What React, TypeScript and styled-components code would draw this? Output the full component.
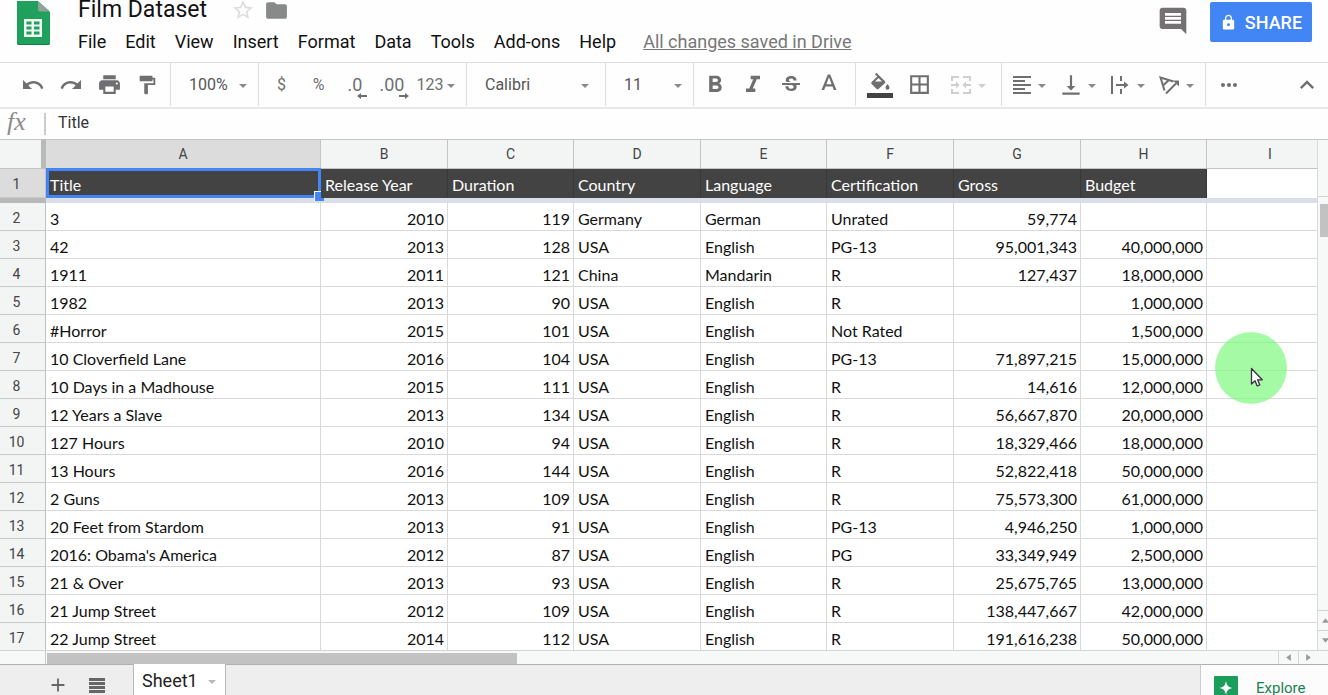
import React from "react";
import styled, { createGlobalStyle } from "styled-components";
import {
  MdUndo,
  MdRedo,
  MdPrint,
  MdFormatPaint,
  MdFormatBold,
  MdFormatItalic,
  MdStrikethroughS,
  MdBorderAll,
  MdFormatAlignLeft,
  MdVerticalAlignBottom,
  MdMoreHoriz,
  MdKeyboardArrowUp,
  MdStarBorder,
  MdFolder,
  MdComment,
  MdLock,
  MdAdd,
} from "react-icons/md";

const GlobalStyle = createGlobalStyle`
  * { box-sizing: border-box; }
  body { margin: 0; background: #fefefe; font-family: Roboto, "Liberation Sans", sans-serif; color: #111; }
  button, input, select { font: inherit; color: inherit; background: none; border: 0; padding: 0; margin: 0; border-radius: 0; }
  button { cursor: pointer; }
`;

const Page = styled.div`
  position: relative;
  display: flex;
  flex-direction: column;
  height: 100vh;
  overflow: hidden;
`;

/* ---------- header ---------- */

const Header = styled.header`
  display: flex;
  align-items: flex-start;
  flex: none;
  height: 62px;
  padding: 0 16px;
`;

const Logo = styled.svg`
  flex: none;
  width: 34px;
  height: 46px;
  margin-right: 28px;
`;

const HeaderMain = styled.div`
  flex: 1;
  min-width: 0;
`;

const TitleRow = styled.div`
  display: flex;
  align-items: center;
  height: 20px;
`;

const DocTitle = styled.h1`
  margin: 0 24px 0 0;
  font-size: 23px;
  font-weight: 400;
  line-height: 20px;
  white-space: nowrap;
`;

const TitleButton = styled.button<{ $color: string }>`
  display: flex;
  margin-right: 9px;
  color: ${(p) => p.$color};
`;

const MenuBar = styled.nav`
  display: flex;
  align-items: center;
  gap: 19px;
  height: 43px;
  font-size: 18px;
  white-space: nowrap;
`;

const SavedLink = styled.a`
  margin-left: 8px;
  color: #777;
  text-decoration: underline;
`;

const CommentButton = styled.button`
  display: flex;
  margin: 5px 21px 0 0;
  color: #757072;
`;

const ShareButton = styled.button`
  display: flex;
  align-items: center;
  justify-content: center;
  gap: 8px;
  width: 102px;
  height: 40px;
  margin-top: 2px;
  border-radius: 2px;
  background: #4285f4;
  color: #fff;
  font-size: 18px;
  font-weight: 500;
`;

/* ---------- toolbar ---------- */

const Toolbar = styled.div`
  display: flex;
  flex: none;
  height: 47px;
  padding-bottom: 1px;
  border-top: 1px solid #e0e0e0;
  border-bottom: 2px solid #e8e8e8;
  color: #6f6f71;
`;

const Group = styled.div<{ $width: number; $pad: number }>`
  display: flex;
  align-items: center;
  flex: none;
  width: ${(p) => p.$width}px;
  padding-left: ${(p) => p.$pad}px;
  border-right: 1px solid #dedede;
`;

const Tool = styled.button<{ $width?: number }>`
  display: flex;
  align-items: center;
  justify-content: center;
  flex: none;
  gap: 4px;
  width: ${(p) => p.$width ?? 38}px;
  height: 36px;
  font-size: 16px;
`;

const EndTools = styled.div`
  display: flex;
  flex: 1;
  align-items: center;
  justify-content: space-between;
  padding: 0 2px 0 4px;
`;

const Picker = styled.label<{ $end?: number }>`
  display: flex;
  align-items: center;
  flex: 1;
  padding-right: ${(p) => p.$end ?? 11}px;
  font-size: 16px;
  color: #555;
`;

const PickerSelect = styled.select`
  flex: 1;
  min-width: 0;
  appearance: none;
  outline: none;
`;

const CaretSvg = styled.svg<{ $color: string }>`
  flex: none;
  width: 8px;
  height: 4px;
  margin-top: 3px;
  fill: ${(p) => p.$color};
`;

const Caret = ({ color = "#8a8a8a" }: { color?: string }) => (
  <CaretSvg $color={color} viewBox="0 0 8 4" aria-hidden="true">
    <path d="M0 0h8L4 4z" />
  </CaretSvg>
);

const DecimalLabel = styled.span`
  position: relative;
  font-size: 18px;
`;

const DecimalArrow = styled.svg`
  position: absolute;
  right: -5px;
  bottom: -4px;
  width: 10px;
  height: 6px;
`;

const ToolSvg = styled.svg`
  flex: none;
  width: 26px;
  height: 26px;
`;

/* ---------- formula bar ---------- */

const FormulaBar = styled.div`
  display: flex;
  align-items: center;
  flex: none;
  height: 30px;
  padding: 0 4px;
`;

const Fx = styled.label`
  width: 40px;
  padding: 0 0 4px 3px;
  font-family: "Liberation Serif", serif;
  font-style: italic;
  font-size: 26px;
  line-height: 24px;
  color: #8c8c8c;
`;

const FormulaInput = styled.input`
  flex: 1;
  height: 22px;
  padding: 0 0 4px 12px;
  border-left: 2px solid #ccc;
  font-size: 16px;
  color: #333;
  outline: none;
`;

/* ---------- grid ---------- */

const SheetArea = styled.main`
  display: flex;
  flex: 1;
  min-height: 0;
`;

const GridViewport = styled.div`
  flex: 1;
  min-width: 0;
  overflow: hidden;
  border-right: 1px solid #d9d9d9;
`;

const Grid = styled.table`
  width: 100%;
  min-width: 1334px;
  table-layout: fixed;
  border-collapse: separate;
  border-spacing: 0;
  font-family: Lato, "Liberation Sans", sans-serif;
  font-size: 16px;
  line-height: 20px;
`;

const Corner = styled.td`
  padding: 0;
  height: 30px;
  background: #f3f5f4;
  border-top: 1px solid #c4c4c4;
  border-bottom: 1px solid #c4c4c4;
  border-right: 5px solid #b9b9b9;
`;

const ColumnHead = styled.th<{ $active?: boolean }>`
  padding: 0;
  height: 30px;
  font: 400 14px/20px Roboto, "Liberation Sans", sans-serif;
  color: #444;
  background: ${(p) => (p.$active ? "#dcdcdc" : "#f3f5f4")};
  border-top: 1px solid #c4c4c4;
  border-bottom: 1px solid #c4c4c4;
  border-right: 1px solid #c4c4c4;
`;

const RowHead = styled.th<{ $active?: boolean }>`
  padding: 2px 12px 0 0;
  height: 28px;
  font: 400 14px/20px Roboto, "Liberation Sans", sans-serif;
  color: #444;
  text-align: center;
  background: ${(p) => (p.$active ? "#dcdcdc" : "#f3f5f4")};
  border-right: 1px solid #c0c0c0;
  border-bottom: 1px solid #c9c9c9;
`;

const TitleCell = styled.td<{ $blank?: boolean }>`
  position: relative;
  height: 29px;
  padding: 2px 4px 0;
  color: #fff;
  background: ${(p) => (p.$blank ? "#fff" : "#434343")};
  border-right: 1px solid ${(p) => (p.$blank ? "#d9d9d9" : "#383838")};
  white-space: nowrap;
`;

const Selection = styled.span`
  position: absolute;
  inset: -1px -1px 0 0;
  border: 3px solid #4285f4;

  &::after {
    content: "";
    position: absolute;
    right: -6px;
    bottom: -6px;
    width: 9px;
    height: 9px;
    background: #4285f4;
    border: solid #fff;
    border-width: 1px 0 0 1px;
  }
`;

const FreezeCell = styled.td<{ $head?: boolean }>`
  height: 5px;
  padding: 0;
  background: ${(p) => (p.$head ? "#b9b9b9" : "#dadee8")};
`;

const Cell = styled.td<{ $numeric?: boolean }>`
  height: 28px;
  padding: 4px 3px 0 4px;
  text-align: ${(p) => (p.$numeric ? "right" : "left")};
  background: #fff;
  border-right: 1px solid #d9d9d9;
  border-bottom: 1px solid #d9d9d9;
  white-space: nowrap;
`;

/* ---------- scroll bars ---------- */

const VScroll = styled.div`
  display: flex;
  flex-direction: column;
  flex: none;
  width: 10px;
  background: #f7f8f8;
  border-top: 1px solid #c4c4c4;
`;

const VScrollFrozen = styled.div`
  height: 57px;
  border-bottom: 1px solid #d4d4d4;
`;

const VTrack = styled.div`
  flex: 1;
  padding: 7px 0 0 2px;
`;

const VThumb = styled.div`
  height: 33px;
  background: #c2c2c2;
`;

const ArrowButton = styled.button<{ $vertical?: boolean }>`
  display: flex;
  align-items: center;
  justify-content: center;
  flex: none;
  width: ${(p) => (p.$vertical ? 10 : 20)}px;
  height: ${(p) => (p.$vertical ? 20 : 13)}px;
  padding-left: ${(p) => (p.$vertical ? 4 : 0)}px;
  border: solid #d4d4d4;
  border-width: ${(p) => (p.$vertical ? "1px 0 0 0" : "0 0 0 1px")};

  svg {
    flex: none;
    width: 7px;
    height: 7px;
    fill: #999;
  }
`;

const HScroll = styled.div`
  display: flex;
  flex: none;
  height: 14px;
  padding-right: 10px;
  background: #f7f8f8;
  border-top: 1px solid #d4d4d4;
`;

const HTrack = styled.div`
  flex: 1;
  margin-left: 45px;
  padding: 2px 0 0 1px;
  border-left: 1px solid #c9c9c9;
`;

const HThumb = styled.div`
  width: 470px;
  max-width: 100%;
  height: 11px;
  background: #c2c2c2;
`;

/* ---------- sheet tabs ---------- */

const Footer = styled.footer`
  display: flex;
  flex: none;
  height: 31px;
  overflow: hidden;
  background: #eee;
`;

const FooterTools = styled.div`
  display: flex;
  gap: 16px;
  width: 133px;
  height: 41px;
  padding-left: 46px;
  align-items: center;
  border-top: 1px solid #b0b0b0;
  color: #666;
`;

const FooterButton = styled.button`
  display: flex;
  justify-content: center;
  width: 23px;
`;

const SheetTab = styled.button`
  display: flex;
  align-items: center;
  justify-content: space-between;
  width: 93px;
  height: 33px;
  padding: 0 9px 0 8px;
  background: #fff;
  border: solid #b8b8b8;
  border-width: 0 1px;
  font-size: 18px;
  color: #222;
`;

const FooterFill = styled.div`
  flex: 1;
  border-top: 1px solid #b0b0b0;
`;

const ExploreButton = styled.button`
  display: flex;
  align-items: center;
  gap: 18px;
  width: 128px;
  height: 47px;
  padding-left: 13px;
  background: #fcfcfc;
  border-top: 1px solid #b0b0b0;
  border-left: 1px solid #ccc;
  font-size: 15px;
  color: #17834f;
`;

/* ---------- pointer ---------- */

const PointerHalo = styled.div`
  position: absolute;
  top: 332px;
  right: 41px;
  width: 72px;
  height: 72px;
  border-radius: 50%;
  background: rgba(127, 250, 127, 0.7);
  pointer-events: none;
`;

const PointerSvg = styled.svg`
  position: absolute;
  left: 35px;
  top: 35px;
  width: 14px;
  height: 21px;
`;

const MENUS = ["File", "Edit", "View", "Insert", "Format", "Data", "Tools", "Add-ons", "Help"];

const COLUMNS = [
  { letter: "A", title: "Title", width: 275 },
  { letter: "B", title: "Release Year", width: 127, numeric: true },
  { letter: "C", title: "Duration", width: 126, numeric: true },
  { letter: "D", title: "Country", width: 127 },
  { letter: "E", title: "Language", width: 126 },
  { letter: "F", title: "Certification", width: 127 },
  { letter: "G", title: "Gross", width: 127, numeric: true },
  { letter: "H", title: "Budget", width: 126, numeric: true },
];

const FILMS = [
  ["3", "2010", "119", "Germany", "German", "Unrated", "59,774", ""],
  ["42", "2013", "128", "USA", "English", "PG-13", "95,001,343", "40,000,000"],
  ["1911", "2011", "121", "China", "Mandarin", "R", "127,437", "18,000,000"],
  ["1982", "2013", "90", "USA", "English", "R", "", "1,000,000"],
  ["#Horror", "2015", "101", "USA", "English", "Not Rated", "", "1,500,000"],
  ["10 Cloverfield Lane", "2016", "104", "USA", "English", "PG-13", "71,897,215", "15,000,000"],
  ["10 Days in a Madhouse", "2015", "111", "USA", "English", "R", "14,616", "12,000,000"],
  ["12 Years a Slave", "2013", "134", "USA", "English", "R", "56,667,870", "20,000,000"],
  ["127 Hours", "2010", "94", "USA", "English", "R", "18,329,466", "18,000,000"],
  ["13 Hours", "2016", "144", "USA", "English", "R", "52,822,418", "50,000,000"],
  ["2 Guns", "2013", "109", "USA", "English", "R", "75,573,300", "61,000,000"],
  ["20 Feet from Stardom", "2013", "91", "USA", "English", "PG-13", "4,946,250", "1,000,000"],
  ["2016: Obama's America", "2012", "87", "USA", "English", "PG", "33,349,949", "2,500,000"],
  ["21 & Over", "2013", "93", "USA", "English", "R", "25,675,765", "13,000,000"],
  ["21 Jump Street", "2012", "109", "USA", "English", "R", "138,447,667", "42,000,000"],
  ["22 Jump Street", "2014", "112", "USA", "English", "R", "191,616,238", "50,000,000"],
];

const Decimal = ({ text, right }: { text: string; right?: boolean }) => (
  <DecimalLabel>
    {text}
    <DecimalArrow viewBox="0 0 10 6" fill="currentColor" aria-hidden="true">
      <path d={right ? "M0 2h6V0l4 3-4 3V4H0z" : "M10 2H4V0L0 3l4 3V4h6z"} />
    </DecimalArrow>
  </DecimalLabel>
);

export default function App() {
  return (
    <Page>
      <GlobalStyle />

      <Header>
        <Logo viewBox="0 0 34 46" aria-hidden="true">
          <path d="M1 1h21l12 11v31a2 2 0 0 1-2 2H3a2 2 0 0 1-2-2z" fill="#1fa15d" />
          <path d="M22 1l12 10.500H24a2 2 0 0 1-2-2z" fill="#8fa39a" />
          <path d="M1 42v1a2 2 0 0 0 2 2h29a2 2 0 0 0 2-2v-1a2 2 0 0 1-2 2H3a2 2 0 0 1-2-2z" fill="#178048" />
          <path
            fillRule="evenodd"
            fill="#f1f5f2"
            d="M8 19h18v18H8zM10.500 21.500v3h5v-3zM18 21.500v3h5.500v-3zM10.500 26.500v3h5v-3zM18 26.500v3h5.500v-3zM10.500 31.500v3h5v-3zM18 31.500v3h5.500v-3z"
          />
        </Logo>
        <HeaderMain>
          <TitleRow>
            <DocTitle>Film Dataset</DocTitle>
            <TitleButton $color="#dcdcdc" aria-label="Star">
              <MdStarBorder size={24} />
            </TitleButton>
            <TitleButton $color="#868b8a" aria-label="Move to folder">
              <MdFolder size={25} />
            </TitleButton>
          </TitleRow>
          <MenuBar>
            {MENUS.map((m) => (
              <button key={m}>{m}</button>
            ))}
            <SavedLink href="#drive">All changes saved in Drive</SavedLink>
          </MenuBar>
        </HeaderMain>
        <CommentButton aria-label="Comments">
          <MdComment size={32} />
        </CommentButton>
        <ShareButton>
          <MdLock size={17} />
          SHARE
        </ShareButton>
      </Header>

      <Toolbar role="toolbar" aria-label="Formatting">
        <Group $width={171} $pad={14}>
          <Tool aria-label="Undo"><MdUndo size={24} /></Tool>
          <Tool aria-label="Redo"><MdRedo size={24} /></Tool>
          <Tool aria-label="Print"><MdPrint size={25} /></Tool>
          <Tool aria-label="Paint format"><MdFormatPaint size={22} /></Tool>
        </Group>
        <Group $width={88} $pad={18}>
          <Picker>
            <PickerSelect aria-label="Zoom"><option>100%</option></PickerSelect>
            <Caret />
          </Picker>
        </Group>
        <Group $width={208} $pad={4}>
          <Tool $width={37}>$</Tool>
          <Tool $width={37}>%</Tool>
          <Tool $width={36} aria-label="Decrease decimal places"><Decimal text=".0" /></Tool>
          <Tool $width={38} aria-label="Increase decimal places"><Decimal text=".00" right /></Tool>
          <Tool $width={50}>123<Caret /></Tool>
        </Group>
        <Group $width={139} $pad={18}>
          <Picker $end={16}>
            <PickerSelect aria-label="Font"><option>Calibri</option></PickerSelect>
            <Caret />
          </Picker>
        </Group>
        <Group $width={88} $pad={18}>
          <Picker>
            <PickerSelect aria-label="Font size"><option>11</option></PickerSelect>
            <Caret />
          </Picker>
        </Group>
        <Group $width={162} $pad={2}>
          <Tool aria-label="Bold"><MdFormatBold size={28} /></Tool>
          <Tool aria-label="Italic"><MdFormatItalic size={28} /></Tool>
          <Tool aria-label="Strikethrough"><MdStrikethroughS size={24} /></Tool>
          <Tool aria-label="Text color">
            <ToolSvg viewBox="0 0 26 26" fill="currentColor">
              <path d="M11.800 2.500h2.400L20.500 18h-2.700l-1.300-3.500h-7L8.200 18H5.500zM10.400 12.200h5.200L13 5.300z" />
            </ToolSvg>
          </Tool>
        </Group>
        <Group $width={146} $pad={5}>
          <Tool aria-label="Fill color">
            <ToolSvg viewBox="0 0 26 26" fill="currentColor">
              <path d="M18 9.200 9.400 .8 8 2.200l2.200 2.200L4.600 10a1.300 1.300 0 0 0 0 1.900l5 5c.5.500 1.300.500 1.900 0l6.500-6c.5-.400.5-1.200 0-1.700zM8 9.400l3.500-3.400 3.500 3.400zM20.500 12s-2 2.300-2 3.700a2 2 0 0 0 4 0c0-1.400-2-3.700-2-3.700z" />
              <path d="M0 21h26v5H0z" fill="#434343" />
            </ToolSvg>
          </Tool>
          <Tool $width={41} aria-label="Borders"><MdBorderAll size={25} /></Tool>
          <Tool $width={54} aria-label="Merge cells">
            <ToolSvg viewBox="2 0 26 26" fill="none" stroke="#cfcfcf" strokeWidth="2">
              <path d="M6 9V5h7M17 5h7v4M6 17v4h7M17 21h7v-4M5 13h5M25 13h-5" />
              <path d="M10 9.500l3.500 3.500-3.500 3.500zM20 9.500L16.500 13l3.500 3.500z" fill="#cfcfcf" stroke="none" />
            </ToolSvg>
            <Caret color="#cfcfcf" />
          </Tool>
        </Group>
        <Group $width={204} $pad={1}>
          <Tool $width={49} aria-label="Horizontal align"><MdFormatAlignLeft size={24} /><Caret /></Tool>
          <Tool $width={49} aria-label="Vertical align"><MdVerticalAlignBottom size={26} /><Caret /></Tool>
          <Tool $width={49} aria-label="Text wrapping">
            <ToolSvg viewBox="0 0 26 26" fill="none" stroke="currentColor" strokeWidth="2">
              <path d="M5 4v18M14 4v5M14 17v5M9 13h9" />
              <path d="M17 9.500l4.500 3.500-4.500 3.500z" fill="currentColor" stroke="none" />
            </ToolSvg>
            <Caret />
          </Tool>
          <Tool $width={49} aria-label="Text rotation">
            <ToolSvg viewBox="0 0 26 26" fill="none" stroke="currentColor" strokeWidth="2">
              <path d="M8.500 18.500L4.500 5.500l13 4M7.500 13L13 8M10 21.500L20 11.500" />
              <path d="M17 8.500h6v6z" fill="currentColor" stroke="none" />
            </ToolSvg>
            <Caret />
          </Tool>
        </Group>
        <EndTools>
          <Tool aria-label="More"><MdMoreHoriz size={24} /></Tool>
          <Tool aria-label="Hide the menus"><MdKeyboardArrowUp size={28} /></Tool>
        </EndTools>
      </Toolbar>

      <FormulaBar>
        <Fx htmlFor="formula">fx</Fx>
        <FormulaInput id="formula" defaultValue="Title" />
      </FormulaBar>

      <SheetArea>
        <GridViewport>
          <Grid>
            <colgroup>
              <col width={46} />
              {COLUMNS.map((c) => (
                <col key={c.letter} width={c.width} />
              ))}
              <col />
            </colgroup>
            <thead>
              <tr>
                <Corner />
                {COLUMNS.map((c) => (
                  <ColumnHead key={c.letter} scope="col" $active={c.letter === "A"}>
                    {c.letter}
                  </ColumnHead>
                ))}
                <ColumnHead scope="col">I</ColumnHead>
              </tr>
              <tr>
                <RowHead scope="row" $active>1</RowHead>
                {COLUMNS.map((c) => (
                  <TitleCell key={c.letter}>
                    {c.title}
                    {c.letter === "A" && <Selection />}
                  </TitleCell>
                ))}
                <TitleCell $blank />
              </tr>
              <tr>
                <FreezeCell $head />
                <FreezeCell colSpan={9} />
              </tr>
            </thead>
            <tbody>
              {FILMS.map((film, r) => (
                <tr key={film[0]}>
                  <RowHead scope="row">{r + 2}</RowHead>
                  {film.map((value, i) => (
                    <Cell key={COLUMNS[i].letter} $numeric={COLUMNS[i].numeric}>
                      {value}
                    </Cell>
                  ))}
                  <Cell />
                </tr>
              ))}
            </tbody>
          </Grid>
        </GridViewport>
        <VScroll>
          <VScrollFrozen />
          <VTrack><VThumb /></VTrack>
          <ArrowButton $vertical aria-label="Scroll up">
            <svg viewBox="0 0 6 6"><path d="M0 5h6L3 1z" /></svg>
          </ArrowButton>
          <ArrowButton $vertical aria-label="Scroll down">
            <svg viewBox="0 0 6 6"><path d="M0 1h6L3 5z" /></svg>
          </ArrowButton>
        </VScroll>
      </SheetArea>

      <HScroll>
        <HTrack><HThumb /></HTrack>
        <ArrowButton aria-label="Scroll left">
          <svg viewBox="0 0 6 6"><path d="M5 0v6L1 3z" /></svg>
        </ArrowButton>
        <ArrowButton aria-label="Scroll right">
          <svg viewBox="0 0 6 6"><path d="M1 0v6l4-3z" /></svg>
        </ArrowButton>
      </HScroll>

      <Footer>
        <FooterTools>
          <FooterButton aria-label="Add sheet"><MdAdd size={22} /></FooterButton>
          <FooterButton aria-label="All sheets">
            <svg width="16" height="15" viewBox="0 0 16 15" fill="currentColor">
              <path d="M0 0h16v3H0zM0 4h16v3H0zM0 8h16v3H0zM0 12h16v3H0z" />
            </svg>
          </FooterButton>
        </FooterTools>
        <SheetTab>
          Sheet1
          <Caret color="#b8b8b8" />
        </SheetTab>
        <FooterFill />
        <ExploreButton>
          <svg width="24" height="24" viewBox="0 0 24 24" aria-hidden="true">
            <rect width="24" height="24" rx="1" fill="#1a9e5c" />
            <path d="M12 5c.9 4.700 2.300 6.100 7 7-4.700.9-6.100 2.300-7 7-.9-4.700-2.300-6.100-7-7 4.700-.9 6.100-2.300 7-7z" fill="#fff" />
          </svg>
          Explore
        </ExploreButton>
      </Footer>

      <PointerHalo>
        <PointerSvg viewBox="0 0 14 21" aria-hidden="true">
          <path
            d="M1.500 1.500v15.500l3.500-3.300 2.200 5.300 2.600-1.100-2.200-5.100h4.600z"
            fill="#fff"
            stroke="#3a3040"
            strokeWidth="1.300"
            strokeLinejoin="round"
          />
        </PointerSvg>
      </PointerHalo>
    </Page>
  );
}
